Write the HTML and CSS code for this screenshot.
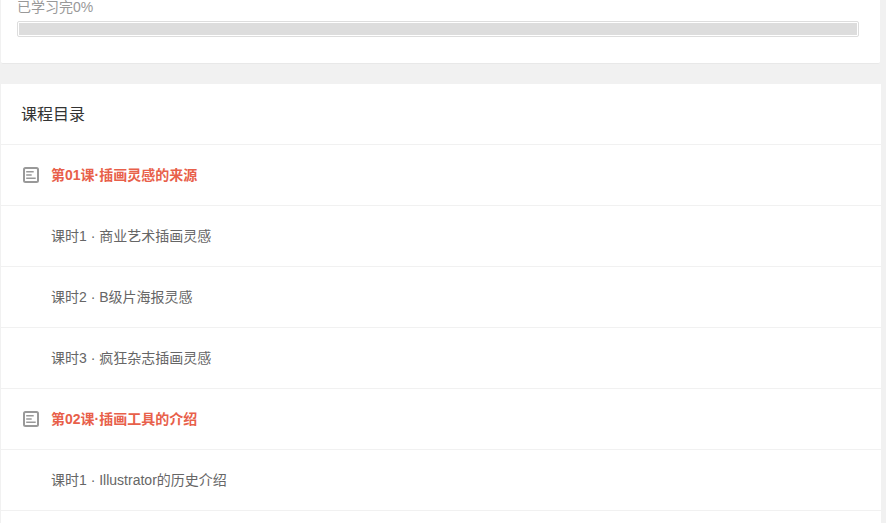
FILE: index.html
```html
<!DOCTYPE html>
<html lang="zh-CN">
<head>
    <meta charset="UTF-8">
    <meta name="viewport" content="width=device-width, initial-scale=1.0">
    <title>课程目录</title>
    <link rel="stylesheet" href="styles.css">
</head>
<body>
    <!-- 学习进度 -->
    <section class="progress-card">
        <p class="progress-text" id="progress-text">已学习完0%</p>
        <div class="progress" role="progressbar" aria-labelledby="progress-text" aria-valuenow="0" aria-valuemin="0" aria-valuemax="100">
            <div class="progress-track"></div>
        </div>
    </section>

    <!-- 课程目录 -->
    <section class="catalog">
        <h2 class="catalog-title">课程目录</h2>
        <ul class="catalog-list">
            <li class="chapter">
                <svg class="chapter-icon" viewBox="0 0 16 16" aria-hidden="true">
                    <rect x="1" y="1" width="14" height="14" rx="1.5"/>
                    <path d="M3.2 4.7h7.5M3.2 8h5.5M3.2 11.3h9.5"/>
                </svg>
                第01课·插画灵感的来源
            </li>
            <li class="lesson"><a href="#">课时1 · 商业艺术插画灵感</a></li>
            <li class="lesson"><a href="#">课时2 · B级片海报灵感</a></li>
            <li class="lesson"><a href="#">课时3 · 疯狂杂志插画灵感</a></li>
            <li class="chapter">
                <svg class="chapter-icon" viewBox="0 0 16 16" aria-hidden="true">
                    <rect x="1" y="1" width="14" height="14" rx="1.5"/>
                    <path d="M3.2 4.7h7.5M3.2 8h5.5M3.2 11.3h9.5"/>
                </svg>
                第02课·插画工具的介绍
            </li>
            <li class="lesson"><a href="#">课时1 · Illustrator的历史介绍</a></li>
        </ul>
    </section>
</body>
</html>
```
FILE: styles.css
```css
* {
    box-sizing: border-box;
}

body {
    margin: 0;
    padding: 0 5px 0 1px;
    background-color: #f1f1f1;
    color: #666;
    font-family: "Liberation Sans", Arial, "Noto Sans CJK SC", sans-serif;
    font-size: 14px;
}

/* 学习进度 */
.progress-card {
    margin: 0 1px 20px 0;
    padding: 0 21px 26px 16px;
    background-color: #fff;
    border-bottom: 1px solid #e8e8e8;
    border-radius: 0 0 2px 2px;
}

.progress-text {
    margin: 0;
    padding-bottom: 7px;
    color: #999;
    line-height: 14px;
}

.progress {
    padding: 1px;
    border: 1px solid #ddd;
    border-radius: 2px;
}

.progress-track {
    height: 12px;
    background-color: #ddd;
}

/* 课程目录 */
.catalog {
    background-color: #fff;
}

.catalog-title {
    margin: 0;
    padding: 2px 20px 0;
    border-bottom: 1px solid #f1f1f1;
    color: #333;
    font-size: 16px;
    font-weight: normal;
    line-height: 58px;
}

.catalog-list {
    margin: 0;
    padding: 0 0 12px;
    list-style: none;
}

.chapter,
.lesson {
    border-bottom: 1px solid #f1f1f1;
    line-height: 60px;
}

/* 章节标题 */
.chapter {
    display: flex;
    align-items: center;
    gap: 12px;
    padding: 0 22px;
    color: #e8604a;
    font-weight: bold;
}

.chapter-icon {
    width: 16px;
    height: 16px;
    fill: none;
    stroke: #999;
    stroke-width: 2;
}

.chapter-icon path {
    stroke-width: 1.6;
}

/* 课时 */
.lesson {
    padding: 0 50px;
}

.lesson a {
    color: #666;
    text-decoration: none;
}

.lesson a:hover {
    color: #e8604a;
}
```
